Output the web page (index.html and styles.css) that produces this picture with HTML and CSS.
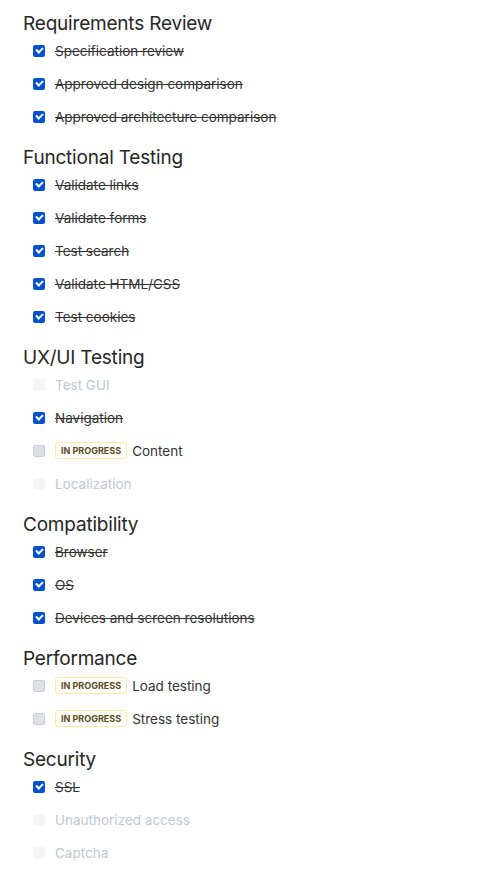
FILE: index.html
```html
<!DOCTYPE html>
<html>
<head>
<meta charset="utf-8">
<link rel="stylesheet" href="styles.css">
</head>
<body>
<div class="page">
  <section class="group">
    <h2 class="title">Requirements Review</h2>
    <ul class="list">
      <li class="item done"><span class="box"></span><span class="label">Specification review</span></li>
      <li class="item done"><span class="box"></span><span class="label">Approved design comparison</span></li>
      <li class="item done"><span class="box"></span><span class="label">Approved architecture comparison</span></li>
    </ul>
  </section>
  <section class="group">
    <h2 class="title">Functional Testing</h2>
    <ul class="list">
      <li class="item done"><span class="box"></span><span class="label">Validate links</span></li>
      <li class="item done"><span class="box"></span><span class="label">Validate forms</span></li>
      <li class="item done"><span class="box"></span><span class="label">Test search</span></li>
      <li class="item done"><span class="box"></span><span class="label">Validate HTML/CSS</span></li>
      <li class="item done"><span class="box"></span><span class="label">Test cookies</span></li>
    </ul>
  </section>
  <section class="group">
    <h2 class="title">UX/UI Testing</h2>
    <ul class="list">
      <li class="item disabled"><span class="box"></span><span class="label">Test GUI</span></li>
      <li class="item done"><span class="box"></span><span class="label">Navigation</span></li>
      <li class="item progress"><span class="box"></span><span class="lozenge">In progress</span><span class="label">Content</span></li>
      <li class="item disabled"><span class="box"></span><span class="label">Localization</span></li>
    </ul>
  </section>
  <section class="group">
    <h2 class="title">Compatibility</h2>
    <ul class="list">
      <li class="item done"><span class="box"></span><span class="label">Browser</span></li>
      <li class="item done"><span class="box"></span><span class="label">OS</span></li>
      <li class="item done"><span class="box"></span><span class="label">Devices and screen resolutions</span></li>
    </ul>
  </section>
  <section class="group">
    <h2 class="title">Performance</h2>
    <ul class="list">
      <li class="item progress"><span class="box"></span><span class="lozenge">In progress</span><span class="label">Load testing</span></li>
      <li class="item progress"><span class="box"></span><span class="lozenge">In progress</span><span class="label">Stress testing</span></li>
    </ul>
  </section>
  <section class="group">
    <h2 class="title">Security</h2>
    <ul class="list">
      <li class="item done"><span class="box"></span><span class="label">SSL</span></li>
      <li class="item disabled"><span class="box"></span><span class="label">Unauthorized access</span></li>
      <li class="item disabled"><span class="box"></span><span class="label">Captcha</span></li>
    </ul>
  </section>
</div>
</body>
</html>
```
FILE: styles.css
```css
html, body {
  margin: 0;
  padding: 0;
  background: #ffffff;
}
body {
  font-family: Inter, "Noto Sans", Roboto, sans-serif;
  color: #333333;
}
.page {
  padding: 13px 0 0 23px;
  display: flex;
  flex-direction: column;
  gap: 14px;
}
.group {
  display: flex;
  flex-direction: column;
}
.title {
  margin: 0;
  font-size: 19px;
  font-weight: 400;
  line-height: 22px;
  color: #262626;
  letter-spacing: -0.2px;
}
.list {
  list-style: none;
  margin: -1px 0 0 0;
  padding: 0 0 0 10px;
}
.item {
  height: 33px;
  display: flex;
  align-items: center;
  font-size: 13.5px;
}
.box {
  width: 12px;
  height: 12px;
  box-sizing: border-box;
  border-radius: 2px;
  margin-right: 10px;
  flex: none;
  position: relative;
}
.done .box {
  background: #0052cc;
}
.done .box::after {
  content: "";
  position: absolute;
  left: 3px;
  top: 2.5px;
  width: 5px;
  height: 3px;
  border-left: 2px solid #fff;
  border-bottom: 2px solid #fff;
  transform: rotate(-45deg);
}
.done .label {
  text-decoration: line-through;
  color: #333;
}
.progress .box {
  background: #dfe1e6;
  border: 1px solid #c9ced6;
}
.disabled .box {
  background: #f4f5f7;
}
.disabled .label {
  color: #c1c7d0;
}
.lozenge {
  display: inline-flex;
  align-items: center;
  height: 17px;
  box-sizing: border-box;
  padding: 0 5px;
  border: 1px solid #ffe8a3;
  border-radius: 3px;
  font-size: 9px;
  font-weight: 700;
  text-transform: uppercase;
  color: #5c4a1a;
  margin-right: 5px;
}
```
